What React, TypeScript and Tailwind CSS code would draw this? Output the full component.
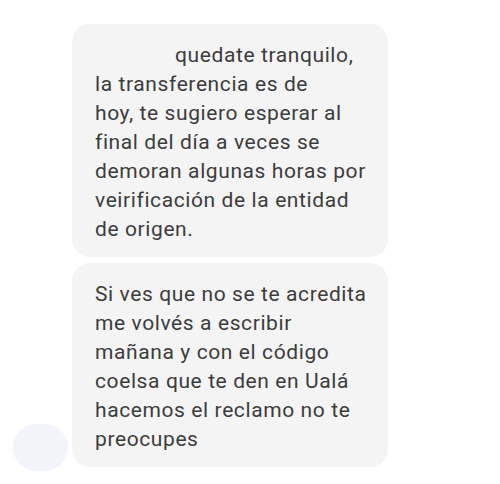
import React from "react";

const msg1 = [
  "quedate tranquilo,",
  "la transferencia es de",
  "hoy, te sugiero esperar al",
  "final del día a veces se",
  "demoran algunas horas por",
  "veirificación de la entidad",
  "de origen.",
];

const msg2 = [
  "Si ves que no se te acredita",
  "me volvés a escribir",
  "mañana y con el código",
  "coelsa que te den en Ualá",
  "hacemos el reclamo no te",
  "preocupes",
];

export default function App() {
  return (
    <div
      className="w-[500px] h-[484px] bg-white overflow-hidden"
      style={{ fontFamily: "Roboto, 'Noto Sans', sans-serif" }}
    >
      <div className="flex flex-col pt-[24px] gap-[6px]">
        <div className="pl-[72px]">
          <div className="w-[316px] h-[233px] rounded-[18px] bg-[#f4f4f4] pl-[23px] pt-[17px] text-[21px] leading-[29px] tracking-[0.6px] text-[#3c3c3c]">
            {msg1.map((l, i) => (
              <div key={i} className={i === 0 ? "whitespace-nowrap pl-[80px]" : "whitespace-nowrap"}>
                {l}
              </div>
            ))}
          </div>
        </div>
        <div className="flex items-end">
          <div className="ml-[13px] mr-[4px] mb-[-4px] w-[55px] h-[47px] rounded-full bg-[#f3f3fb]" />
          <div className="w-[316px] h-[204px] rounded-[18px] bg-[#f4f4f4] pl-[23px] pt-[17px] text-[21px] leading-[29px] tracking-[0.6px] text-[#3c3c3c]">
            {msg2.map((l, i) => (
              <div key={i} className="whitespace-nowrap">
                {l}
              </div>
            ))}
          </div>
        </div>
      </div>
    </div>
  );
}
